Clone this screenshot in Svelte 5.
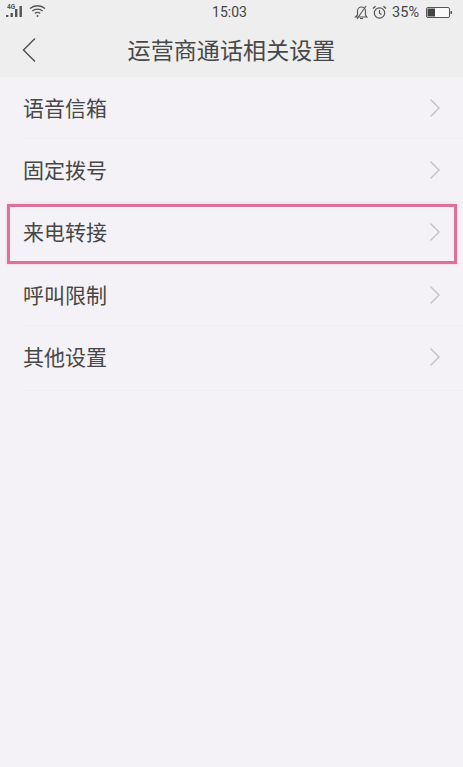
<script>
  const rows = [
    { label: "语音信箱" },
    { label: "固定拨号" },
    { label: "来电转接", marked: true },
    { label: "呼叫限制" },
    { label: "其他设置" },
  ];
</script>

<div class="page">
  <header>
    <div class="status">
      <div class="status-left">
        <div class="signal">
          <span class="net">4G</span>
          <svg width="17" height="14" viewBox="0 0 17 14">
            <rect x="0" y="11" width="2.4" height="2" fill="#555" />
            <rect x="4.5" y="9" width="2.4" height="4" fill="#555" />
            <rect x="9" y="5" width="2.4" height="8" fill="#555" />
            <rect x="13.5" y="2" width="2.4" height="11" fill="#555" />
          </svg>
        </div>
        <svg width="17" height="14" viewBox="0 0 17 14" fill="none" stroke="#555" stroke-width="1.3">
          <path d="M1 4.5 C5 .8 12 .8 16 4.5" />
          <path d="M3.4 7 C6 4.6 11 4.6 13.6 7" />
          <path d="M5.8 9.4 C7.4 8.2 9.6 8.2 11.2 9.4" />
          <circle cx="8.5" cy="12" r="1" fill="#555" stroke="none" />
        </svg>
      </div>
      <span class="time">15:03</span>
      <div class="status-right">
        <svg width="15" height="15" viewBox="0 0 15 15" fill="none" stroke="#555" stroke-width="1.1">
          <path d="M1.5 12 H13 L11.5 10 V6 C11.5 3.5 9.8 2 7.5 2 C5.2 2 3.5 3.5 3.5 6 V10 Z" />
          <path d="M6 13.5 H9" />
          <path d="M3 14 L12 1" />
        </svg>
        <svg width="15" height="15" viewBox="0 0 15 15" fill="none" stroke="#555" stroke-width="1.2">
          <circle cx="7.5" cy="8" r="5.2" />
          <path d="M7.5 5 V8.2 L9.5 9.5" />
          <path d="M1 3.5 L3.5 1.2 M14 3.5 L11.5 1.2" stroke-width="1.5" />
        </svg>
        <span class="pct">35%</span>
        <svg width="27" height="13" viewBox="0 0 27 13">
          <rect x=".5" y="1.5" width="23" height="10" rx="1.5" fill="#fbfafb" stroke="#555" />
          <rect x="1.5" y="2.5" width="7.5" height="8" fill="#444" />
          <rect x="24.5" y="5" width="1.5" height="3" fill="#555" />
        </svg>
      </div>
    </div>
    <div class="titlebar">
      <svg class="back" width="16" height="26" viewBox="0 0 16 26" fill="none" stroke="#555" stroke-width="1.5">
        <path d="M14 1.5 L2.5 13 L14 24.5" />
      </svg>
      <h1>运营商通话相关设置</h1>
    </div>
  </header>

  <ul>
    {#each rows as row}
      <li class:marked={row.marked}>
        <span>{row.label}</span>
        <svg width="12" height="20" viewBox="0 0 12 20" fill="none" stroke="#c6c6c8" stroke-width="1.5">
          <path d="M1.5 1.5 L10 10 L1.5 18.5" />
        </svg>
        {#if row.marked}
          <div class="highlight"></div>
        {/if}
      </li>
    {/each}
  </ul>
</div>

<style>
  :global(body) {
    background: #f4f2f6;
  }

  .page {
    width: 463px;
    height: 767px;
    overflow: hidden;
    background: #f4f2f6;
    font-family: "Noto Sans CJK SC", "Liberation Sans", sans-serif;
    color: #474747;
  }

  header {
    background: #efeeef;
    height: 77px;
  }

  .status {
    height: 24px;
    padding: 0 10px 0 6px;
    display: grid;
    grid-template-columns: 1fr auto 1fr;
    align-items: center;
  }

  .status-left {
    display: flex;
    align-items: center;
    gap: 6px;
    padding-bottom: 3px;
  }

  .signal {
    width: 17px;
    height: 14px;
    position: relative;
  }

  .signal svg {
    display: block;
  }

  .net {
    position: absolute;
    left: 1px;
    top: 0;
    font-family: "Roboto", sans-serif;
    font-size: 6.5px;
    font-weight: 700;
    line-height: 7px;
    color: #555;
  }

  .status-right {
    display: flex;
    align-items: center;
    justify-content: flex-end;
    gap: 3px;
  }

  .time {
    font-family: "Roboto", sans-serif;
    font-size: 14px;
    color: #444;
  }

  .pct {
    font-family: "Roboto", sans-serif;
    font-size: 14.5px;
    color: #444;
    margin: 0 4px 0 2px;
  }

  .titlebar {
    height: 53px;
    display: flex;
    align-items: center;
    justify-content: center;
    position: relative;
  }

  .back {
    position: absolute;
    left: 21px;
    top: 13px;
  }

  h1 {
    margin: 0;
    font-size: 23px;
    font-weight: 400;
    letter-spacing: .1px;
    color: #474747;
    transform: translateY(-2px);
  }

  ul {
    list-style: none;
    margin: 0;
    padding: 0;
  }

  li {
    height: 62.3px;
    box-sizing: border-box;
    margin-left: 23px;
    padding-right: 22px;
    display: flex;
    align-items: center;
    justify-content: space-between;
    font-size: 21px;
    position: relative;
    border-bottom: 1px solid #efedf0;
  }

  li span {
    transform: translateY(-1.4px);
  }

  li:last-child {
    height: 65px;
    padding-bottom: 3px;
  }

  .highlight {
    position: absolute;
    left: -16px;
    right: 6px;
    top: 2.5px;
    height: 60px;
    border: 3px solid #dd7299;
    box-shadow: 0 0 2px #f3b6cb;
    box-sizing: border-box;
  }
</style>
